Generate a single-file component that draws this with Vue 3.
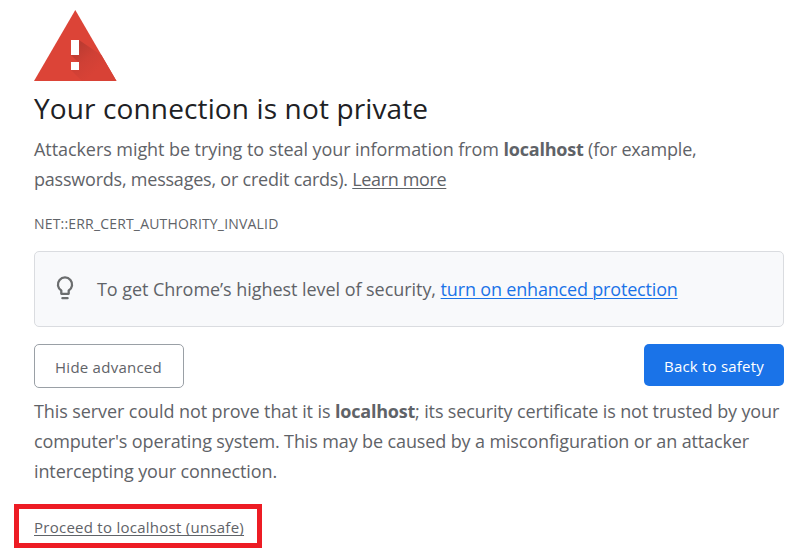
<script setup>
const host = 'localhost'
</script>

<template>
  <main class="page">
    <svg class="warning" width="84" height="72" viewBox="0 0 84 72" aria-hidden="true">
      <defs>
        <linearGradient id="shade" x1="43" y1="36" x2="64" y2="60" gradientUnits="userSpaceOnUse">
          <stop offset="0" stop-color="#bb3b31" />
          <stop offset="0.5" stop-color="#cf4035" />
          <stop offset="1" stop-color="#d84236" />
        </linearGradient>
      </defs>
      <path d="M41.3 0 82.5 71H0Z" fill="#dc4437" />
      <path d="M45 30 67.5 45.2 82.5 71H48L37 60 45 53 37 45Z" fill="url(#shade)" />
      <path d="M37 30h8v15h-8zM37 52h8v8h-8z" fill="#fff" />
    </svg>

    <h1 class="title">Your connection is not private</h1>

    <p class="text intro">
      <span class="line"><span class="t1">Attackers might be trying to steal your information from </span><b>{{ host }}</b><span class="t2"> (for example,</span></span>
      <span class="line"><span class="t3">passwords, messages, or credit cards). </span><a class="learn">Learn more</a></span>
    </p>

    <div class="code">NET::ERR_CERT_AUTHORITY_INVALID</div>

    <section class="promo">
      <svg class="bulb" width="24" height="26" viewBox="0 0 24 26" aria-hidden="true">
        <path d="M8.3 14.6A7.1 7.1 0 1 1 15.7 14.6V17.8H8.3Z" fill="none" stroke="#6b6d6e" stroke-width="2.3" stroke-linejoin="round" />
        <path d="M9.4 22.2h5.2" stroke="#6b6d6e" stroke-width="2.3" stroke-linecap="round" />
      </svg>
      <p class="text promo-text"><span class="t4">To get Chrome’s highest level of security, </span><a class="enhance">turn on enhanced protection</a></p>
    </section>

    <div class="actions">
      <button class="btn secondary">Hide advanced</button>
      <button class="btn primary">Back to safety</button>
    </div>

    <p class="text detail">
      <span class="line"><span class="t5">This server could not prove that it is </span><b>{{ host }}</b><span class="t6">; its security certificate is not trusted by your</span></span>
      <span class="line t7">computer's operating system. This may be caused by a misconfiguration or an attacker</span>
      <span class="line t8">intercepting your connection.</span>
    </p>

    <div class="proceed"><a>Proceed to {{ host }} (unsafe)</a></div>
  </main>
</template>

<style>
body {
  background: #fff;
}
</style>

<style scoped>
.page {
  box-sizing: border-box;
  width: 802px;
  height: 560px;
  padding: 10px 18px 0 34px;
  overflow: hidden;
  display: flex;
  flex-direction: column;
  color: #5f6368;
  font-family: "Open Sans", "Noto Sans", sans-serif;
}
.warning {
  display: block;
  flex: none;
}
.title {
  margin: 7px 0 0;
  color: #202124;
  font-size: 28px;
  font-weight: 400;
  line-height: 38px;
  letter-spacing: 0.13px;
}
.text {
  margin: 0;
  font-size: 18px;
  line-height: 30px;
  letter-spacing: -0.12px;
}
.text b {
  font-weight: 700;
  letter-spacing: -0.22px;
}
.line {
  display: block;
  white-space: pre;
}
.intro {
  margin-top: 7px;
}
.t1 { letter-spacing: -0.07px; }
.t2 { letter-spacing: -0.17px; }
.t3 { letter-spacing: -0.22px; }
.t4 { letter-spacing: -0.05px; }
.t5 { letter-spacing: -0.09px; }
.t6 { letter-spacing: -0.137px; }
.t7 { letter-spacing: -0.126px; }
.t8 { letter-spacing: -0.117px; }
a {
  text-decoration: underline;
  text-decoration-thickness: 1px;
  text-underline-offset: 2px;
}
.learn {
  letter-spacing: -0.35px;
}
.code {
  margin-top: 20px;
  font-size: 14px;
  line-height: 20px;
  letter-spacing: 0.18px;
}
.promo {
  box-sizing: border-box;
  height: 76px;
  margin-top: 17px;
  padding: 0 18px;
  display: flex;
  align-items: center;
  gap: 20px;
  border: 1px solid #dadce0;
  border-radius: 5px;
  background: #f8f9fb;
}
.bulb {
  flex: none;
}
.promo-text {
  white-space: pre;
}
.enhance {
  color: #1a73e8;
  letter-spacing: -0.18px;
}
.actions {
  height: 44px;
  margin-top: 17px;
  display: flex;
  align-items: flex-start;
  justify-content: space-between;
}
.btn {
  box-sizing: border-box;
  padding: 0;
  border-radius: 5px;
  font: 400 15px/20px "Open Sans", "Noto Sans", sans-serif;
}
.secondary {
  width: 150px;
  height: 44px;
  padding: 2px 1px 0 0;
  border: 1px solid #9aa0a6;
  background: #fff;
  color: #5f6368;
  letter-spacing: 0.25px;
}
.primary {
  width: 140px;
  height: 42px;
  padding-top: 2px;
  border: 0;
  background: #1a73e8;
  color: #fff;
  letter-spacing: 0.21px;
}
.detail {
  margin-top: 8px;
}
.proceed {
  box-sizing: border-box;
  width: 248px;
  height: 44px;
  margin: 18px 0 0 -20px;
  padding: 8px 15px 0;
  border: 5px solid #ed1c24;
  font-size: 15px;
  line-height: 20px;
  letter-spacing: 0.26px;
  white-space: nowrap;
}
</style>
